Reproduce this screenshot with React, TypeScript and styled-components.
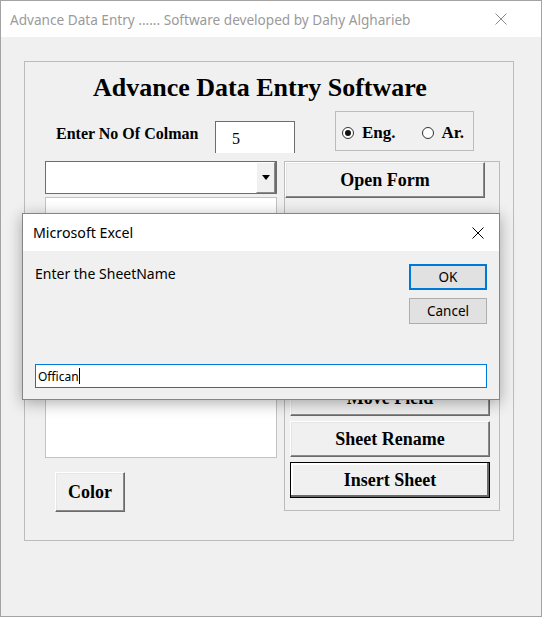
import React from "react";
import styled, { createGlobalStyle } from "styled-components";

const GlobalStyle = createGlobalStyle`
  html, body {
    margin: 0;
    padding: 0;
    background: #f0f0f0;
  }
  * {
    box-sizing: border-box;
  }
`;

const serif = `"Liberation Serif", "Times New Roman", serif`;
const sans = `"Noto Sans", "Open Sans", sans-serif`;

const Window = styled.div`
  position: relative;
  width: 542px;
  height: 617px;
  border: 1px solid #a3a3a3;
  background: #f0f0f0;
  display: flex;
  flex-direction: column;
`;

const TitleBar = styled.div`
  height: 36px;
  flex-shrink: 0;
  background: #fff;
  display: flex;
  align-items: center;
  justify-content: space-between;
  padding: 0 34px 0 9px;
  font-family: ${sans};
  font-size: 13.6px;
  color: #9a9a9a;
`;

const CloseIcon = ({ color, size }: { color: string; size: number }) => (
  <svg width={size} height={size} viewBox="0 0 12 12">
    <path d="M0.5 0.5 L11.5 11.5 M11.5 0.5 L0.5 11.5" stroke={color} strokeWidth="1" fill="none" />
  </svg>
);

const Body = styled.div`
  flex: 1;
  padding: 24px 0 0 23px;
`;

const Frame = styled.div`
  width: 490px;
  height: 480px;
  border: 1px solid #bcbcbc;
  display: flex;
  flex-direction: column;
`;

const Heading = styled.h1`
  margin: 11px 0 0 68px;
  font-family: ${serif};
  font-weight: bold;
  font-size: 26px;
  line-height: 30px;
  color: #000;
`;

const SettingsRow = styled.div`
  display: flex;
  align-items: flex-start;
  height: 40px;
  margin-top: 8px;
`;

const FieldLabel = styled.label`
  width: 159px;
  margin: 13px 0 0 31px;
  font-family: ${serif};
  font-weight: bold;
  font-size: 16px;
  line-height: 20px;
  color: #000;
`;

const NumberBox = styled.div`
  width: 80px;
  height: 32px;
  margin-top: 10px;
  background: #fff;
  border: 1px solid #6d6d6d;
  border-bottom: none;
  padding-left: 16px;
  font-family: ${serif};
  font-size: 16px;
  line-height: 33px;
  color: #000;
`;

const LangGroup = styled.div`
  width: 139px;
  height: 40px;
  margin-left: 40px;
  border: 1px solid #bcbcbc;
  display: flex;
  align-items: center;
  padding: 3px 0 0 6px;
  gap: 26px;
`;

const Radio = styled.div`
  display: flex;
  align-items: center;
  gap: 8px;
  font-family: ${serif};
  font-weight: bold;
  font-size: 17px;
  color: #000;
`;

const RadioDot = styled.span<{ $checked?: boolean }>`
  position: relative;
  width: 12px;
  height: 12px;
  border: 1px solid #333;
  border-radius: 50%;
  background: #fff;

  &::after {
    content: "";
    display: ${(p) => (p.$checked ? "block" : "none")};
    position: absolute;
    left: 2px;
    top: 2px;
    width: 6px;
    height: 6px;
    border-radius: 50%;
    background: #111;
  }
`;

const Main = styled.div`
  display: flex;
  align-items: flex-start;
  margin-top: 10px;
  padding-left: 20px;
`;

const LeftColumn = styled.div`
  width: 232px;
  display: flex;
  flex-direction: column;
`;

const Combo = styled.div`
  height: 33px;
  display: flex;
  background: #fff;
  border: 1px solid #6d6d6d;
  border-right-width: 2px;
`;

const ComboText = styled.div`
  flex: 1;
`;

const ComboButton = styled.div`
  width: 19px;
  background: #f0f0f0;
  border-left: 1px solid #fff;
  border-top: 1px solid #fff;
  border-right: 1px solid #8a8a8a;
  border-bottom: 1px solid #8a8a8a;
  display: flex;
  align-items: center;
  justify-content: center;
`;

const Arrow = styled.span`
  width: 0;
  height: 0;
  border-left: 4px solid transparent;
  border-right: 4px solid transparent;
  border-top: 5px solid #000;
`;

const ListBox = styled.div`
  height: 261px;
  margin-top: 3px;
  background: #fff;
  border: 1px solid #c2c2c2;
`;

const FormButton = styled.button<{ $focused?: boolean }>`
  width: 200px;
  height: 36px;
  padding: 0;
  background: #f0f0f0;
  font-family: ${serif};
  font-weight: bold;
  font-size: 18px;
  color: #000;
  cursor: pointer;
  border: 1px solid;
  border-color: ${(p) => (p.$focused ? "#000" : "#fff #6a6a6a #6a6a6a #fff")};
  box-shadow: ${(p) =>
    p.$focused
      ? "inset -2px -2px 0 #6a6a6a, inset 2px 2px 0 #fff"
      : "inset -1px -1px 0 #8a8a8a, inset 1px 1px 0 #e6e6e6"};
`;

const ColorButton = styled(FormButton)`
  width: 70px;
  height: 40px;
  margin: 14px 0 0 10px;
`;

const ActionPanel = styled.div`
  width: 216px;
  height: 350px;
  margin-left: 7px;
  border: 1px solid #bcbcbc;
  display: flex;
  flex-direction: column;
`;

const ActionList = styled.div`
  display: flex;
  flex-direction: column;
  gap: 5px;
  margin: 18px 0 0 5px;
`;

const Dialog = styled.div`
  position: absolute;
  left: 21px;
  top: 212px;
  width: 478px;
  height: 187px;
  border: 1px solid #858585;
  background: #f0f0f0;
  box-shadow: 0 3px 14px rgba(0, 0, 0, 0.32);
  display: flex;
  flex-direction: column;
  font-family: ${sans};
  color: #000;
`;

const DialogTitle = styled.div`
  height: 37px;
  flex-shrink: 0;
  background: #fff;
  display: flex;
  align-items: center;
  justify-content: space-between;
  padding: 0 15px 0 10px;
  font-size: 14.2px;
`;

const DialogBody = styled.div`
  flex: 1;
  display: flex;
  flex-direction: column;
  justify-content: space-between;
  padding: 13px 12px 11px 12px;
`;

const PromptRow = styled.div`
  display: flex;
  justify-content: space-between;
  align-items: flex-start;
`;

const Prompt = styled.div`
  font-size: 14px;
  line-height: 19px;
`;

const DialogButtons = styled.div`
  display: flex;
  flex-direction: column;
  gap: 8px;
`;

const DialogButton = styled.button<{ $default?: boolean }>`
  width: 78px;
  height: 26px;
  padding: 0;
  background: #e1e1e1;
  border: ${(p) => (p.$default ? "2px solid #0078d7" : "1px solid #adadad")};
  font-family: ${sans};
  font-size: 13.5px;
  color: #000;
  cursor: pointer;
`;

const TextInput = styled.div`
  height: 24px;
  background: #fff;
  border: 1px solid #0078d7;
  padding-left: 2px;
  display: flex;
  align-items: center;
  font-size: 12px;
`;

const Caret = styled.span`
  width: 1px;
  height: 16px;
  background: #000;
`;

const hiddenActions = ["Add Field", "Delete Field", "Edit Field", "Rename Field"];

export default function App() {
  return (
    <>
      <GlobalStyle />
      <Window>
        <TitleBar>
          <span>Advance Data Entry ...... Software developed by Dahy Algharieb</span>
          <CloseIcon color="#8a8a8a" size={12} />
        </TitleBar>
        <Body>
          <Frame>
            <Heading>Advance Data Entry Software</Heading>
            <SettingsRow>
              <FieldLabel>Enter No Of Colman</FieldLabel>
              <NumberBox>5</NumberBox>
              <LangGroup>
                <Radio>
                  <RadioDot $checked />
                  Eng.
                </Radio>
                <Radio>
                  <RadioDot />
                  Ar.
                </Radio>
              </LangGroup>
            </SettingsRow>
            <Main>
              <LeftColumn>
                <Combo>
                  <ComboText />
                  <ComboButton>
                    <Arrow />
                  </ComboButton>
                </Combo>
                <ListBox />
                <ColorButton>Color</ColorButton>
              </LeftColumn>
              <ActionPanel>
                <FormButton>Open Form</FormButton>
                <ActionList>
                  {hiddenActions.map((a) => (
                    <FormButton key={a}>{a}</FormButton>
                  ))}
                  <FormButton>Move Field</FormButton>
                  <FormButton>Sheet Rename</FormButton>
                  <FormButton $focused>Insert Sheet</FormButton>
                </ActionList>
              </ActionPanel>
            </Main>
          </Frame>
        </Body>

        <Dialog>
          <DialogTitle>
            <span>Microsoft Excel</span>
            <CloseIcon color="#000" size={12} />
          </DialogTitle>
          <DialogBody>
            <PromptRow>
              <Prompt>Enter the SheetName</Prompt>
              <DialogButtons>
                <DialogButton $default>OK</DialogButton>
                <DialogButton>Cancel</DialogButton>
              </DialogButtons>
            </PromptRow>
            <TextInput>
              Offican
              <Caret />
            </TextInput>
          </DialogBody>
        </Dialog>
      </Window>
    </>
  );
}
